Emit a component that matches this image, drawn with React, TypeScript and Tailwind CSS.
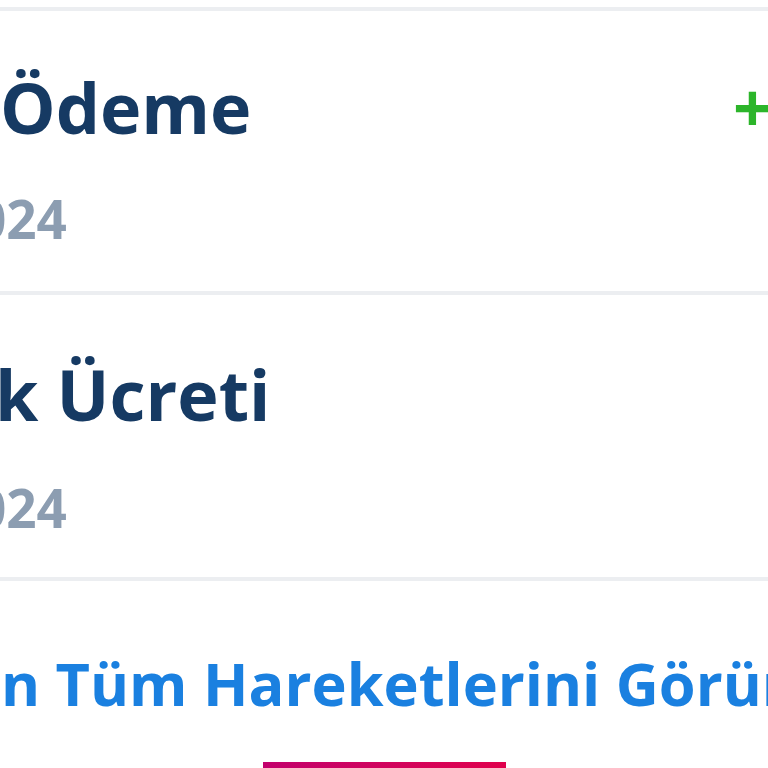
import React from "react";

export default function App() {
  return (
    <div
      className="w-[768px] h-[768px] overflow-hidden bg-white flex flex-col"
      style={{ fontFamily: '"Open Sans", "Noto Sans", sans-serif' }}
    >
      <div className="h-[7px] shrink-0 bg-white" />
      <div className="h-[4px] shrink-0 bg-[#eceef1]" />

      {/* Row 1 */}
      <div className="h-[280px] shrink-0 flex flex-col overflow-hidden relative">
        <div className="flex items-start justify-between pt-[48px]">
          <div className="text-[70px] leading-[96px] font-bold text-[#163a63] whitespace-nowrap">
            Ödeme
          </div>
          <div className="text-[68px] leading-[96px] font-bold text-[#2cb52a] whitespace-nowrap w-[35px] overflow-hidden">
            +
          </div>
        </div>
        <div className="mt-[32px] text-[53px] leading-[64px] font-bold text-[#8c9db1] whitespace-nowrap ml-[-24px]">
          024
        </div>
      </div>
      <div className="h-[4px] shrink-0 bg-[#eceef1]" />

      {/* Row 2 */}
      <div className="h-[282px] shrink-0 flex flex-col overflow-hidden">
        <div className="pt-[51px] text-[70px] leading-[96px] font-bold text-[#163a63] whitespace-nowrap ml-[-5px]">
          k Ücreti
        </div>
        <div className="mt-[34px] text-[53px] leading-[64px] font-bold text-[#8c9db1] whitespace-nowrap ml-[-24px]">
          024
        </div>
      </div>
      <div className="h-[4px] shrink-0 bg-[#eceef1]" />

      {/* Link */}
      <div className="flex-1 flex flex-col overflow-hidden">
        <div className="flex-1 flex items-center pt-[22px]">
          <div className="text-[59.5px] leading-[80px] font-bold text-[#1a80e0] whitespace-nowrap ml-[1px]">
            n Tüm Hareketlerini Görün
          </div>
        </div>
        <div className="h-[6px] shrink-0 flex justify-center">
          <div className="w-[243px] h-[6px] bg-gradient-to-r from-[#c2006c] to-[#e0004c]" />
        </div>
      </div>
    </div>
  );
}
